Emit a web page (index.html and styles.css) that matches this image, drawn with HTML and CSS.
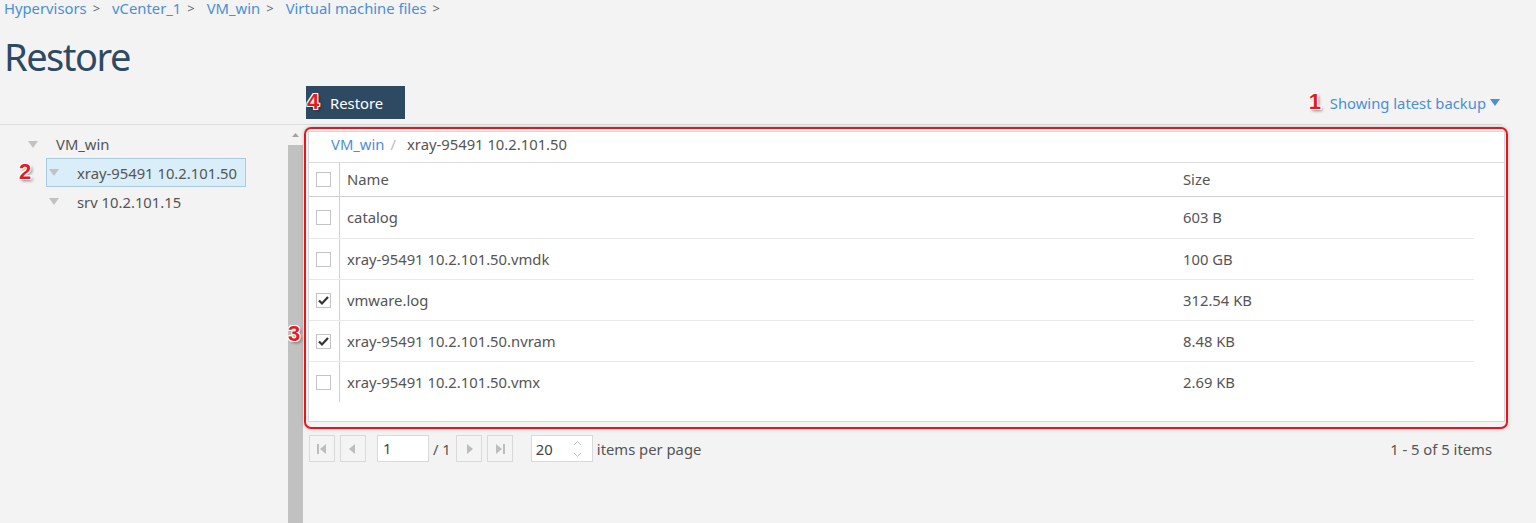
FILE: index.html
```html
<!DOCTYPE html>
<html lang="en">
<head>
    <meta charset="UTF-8">
    <meta name="viewport" content="width=device-width, initial-scale=1.0">
    <title>Restore</title>
    <link rel="stylesheet" href="styles.css">
</head>
<body>
    <div class="crumbs">
        <a href="#">Hypervisors</a><span class="sep">&gt;</span>
        <a href="#">vCenter_1</a><span class="sep">&gt;</span>
        <a href="#">VM_win</a><span class="sep">&gt;</span>
        <a href="#">Virtual machine files</a><span class="sep">&gt;</span>
    </div>

    <h1 class="title">Restore</h1>

    <div class="toolbar">
        <button class="restore-btn"><span class="mark mark-4">4</span>Restore</button>
        <a class="backup-link" href="#"><span class="mark mark-1">1</span>Showing latest backup
            <svg width="10" height="7" viewBox="0 0 10 7"><polygon points="0,0 10,0 5,7" fill="#4b8fd5"/></svg>
        </a>
    </div>

    <div class="main">
        <div class="tree">
            <div class="node root">
                <svg class="tri" width="10" height="7" viewBox="0 0 10 7"><polygon points="0,0 10,0 5,7"/></svg>VM_win
            </div>
            <div class="node child selected">
                <span class="mark mark-2">2</span>
                <svg class="tri" width="10" height="7" viewBox="0 0 10 7"><polygon points="0,0 10,0 5,7"/></svg>xray-95491 10.2.101.50
            </div>
            <div class="node child">
                <svg class="tri" width="10" height="7" viewBox="0 0 10 7"><polygon points="0,0 10,0 5,7"/></svg>srv 10.2.101.15
            </div>
        </div>

        <div class="scrollbar">
            <div class="scroll-up"><svg width="7" height="4" viewBox="0 0 7 4"><polygon points="0,4 7,4 3.5,0" fill="#a3a3a3"/></svg></div>
            <div class="thumb"></div>
        </div>

        <div class="content">
            <div class="callout">
                <span class="mark mark-3">3</span>
                <div class="grid">
                    <div class="grid-crumbs">
                        <a href="#">VM_win</a><span class="slash">/</span><span>xray-95491 10.2.101.50</span>
                    </div>
                    <div class="grid-head">
                        <div class="check-cell"><span class="checkbox"></span></div>
                        <div class="name-cell">Name</div>
                        <div class="size-cell">Size</div>
                    </div>
                    <div class="grid-body">
                        <div class="row">
                            <div class="check-cell"><span class="checkbox"></span></div>
                            <div class="name-cell">catalog</div>
                            <div class="size-cell">603 B</div>
                        </div>
                        <div class="row">
                            <div class="check-cell"><span class="checkbox"></span></div>
                            <div class="name-cell">xray-95491 10.2.101.50.vmdk</div>
                            <div class="size-cell">100 GB</div>
                        </div>
                        <div class="row">
                            <div class="check-cell"><span class="checkbox"><svg width="13" height="13" viewBox="0 0 13 13"><polyline points="2,6.5 5,9.5 11,3" fill="none" stroke="#333" stroke-width="2.2"/></svg></span></div>
                            <div class="name-cell">vmware.log</div>
                            <div class="size-cell">312.54 KB</div>
                        </div>
                        <div class="row">
                            <div class="check-cell"><span class="checkbox"><svg width="13" height="13" viewBox="0 0 13 13"><polyline points="2,6.5 5,9.5 11,3" fill="none" stroke="#333" stroke-width="2.2"/></svg></span></div>
                            <div class="name-cell">xray-95491 10.2.101.50.nvram</div>
                            <div class="size-cell">8.48 KB</div>
                        </div>
                        <div class="row">
                            <div class="check-cell"><span class="checkbox"></span></div>
                            <div class="name-cell">xray-95491 10.2.101.50.vmx</div>
                            <div class="size-cell">2.69 KB</div>
                        </div>
                    </div>
                </div>
            </div>

            <div class="pager">
                <span class="pg-btn"><svg width="12" height="12" viewBox="0 0 12 12"><rect x="1" y="1" width="2" height="10"/><polygon points="10,1 4,6 10,11"/></svg></span>
                <span class="pg-btn prev"><svg width="12" height="12" viewBox="0 0 12 12"><polygon points="8,1 2,6 8,11"/></svg></span>
                <span class="pg-input">1</span>
                <span class="pg-of">/ 1</span>
                <span class="pg-btn"><svg width="12" height="12" viewBox="0 0 12 12"><polygon points="4,1 10,6 4,11"/></svg></span>
                <span class="pg-btn last"><svg width="12" height="12" viewBox="0 0 12 12"><polygon points="2,1 8,6 2,11"/><rect x="9" y="1" width="2" height="10"/></svg></span>
                <span class="pg-size">20
                    <svg width="9" height="18" viewBox="0 0 9 18"><polyline points="1,5 4.5,1.5 8,5" fill="none" stroke="#c4c4c4"/><polyline points="1,13 4.5,16.5 8,13" fill="none" stroke="#c4c4c4"/></svg>
                </span>
                <span class="pg-label">items per page</span>
                <span class="pg-info">1 - 5 of 5 items</span>
            </div>
        </div>
    </div>
</body>
</html>
```

FILE: styles.css
```css
body{
    margin:0;
    height:523px;
    overflow:hidden;
    background-color:#f3f3f3;
    font-family:"Noto Sans","Open Sans",sans-serif;
    font-size:14.8px;
    color:#555;
}
a{
    color:#4b8fd5;
    text-decoration:none;
}

/* top breadcrumb */
.crumbs{
    display:flex;
    align-items:center;
    height:16px;
    line-height:16px;
    padding-left:4px;
}
.crumbs .sep{
    margin:0 12px 0 6px;
    color:#666;
    font-size:13px;
}

.title{
    margin:18px 0 0 4px;
    font-size:38px;
    font-weight:normal;
    line-height:44px;
    letter-spacing:-1.5px;
    color:#2e4a62;
}

.toolbar{
    display:flex;
    align-items:center;
    justify-content:space-between;
    padding:8px 0 5px 306px;
    margin-right:34px;
    border-bottom:1px solid #dedede;
}
.restore-btn{
    position:relative;
    width:99px;
    height:33px;
    padding:0 0 0 24px;
    text-align:left;
    border:none;
    background-color:#2e4a62;
    color:white;
    font-family:inherit;
    font-size:14.8px;
    cursor:pointer;
}
.backup-link{
    position:relative;
    display:flex;
    align-items:center;
    gap:4px;
    margin-right:2px;
}

/* red callout numbers */
.mark{
    position:absolute;
    color:#e41b23;
    font-family:"Liberation Sans",Arial,sans-serif;
    font-weight:bold;
    font-size:22px;
    line-height:24px;
    text-shadow:-1px -1px 0 #fff,1px -1px 0 #fff,-1px 1px 0 #fff,1px 1px 0 #fff,2px 2px 3px rgba(0,0,0,.45);
}
.mark-4{ left:1px; top:4px; }
.mark-1{ left:-21px; top:-3px; }
.mark-2{ left:-28px; top:1px; }
.mark-3{ left:-18px; top:193px; }

.main{
    display:flex;
    height:398px;
}

/* tree */
.tree{
    width:288px;
    padding-top:5px;
    box-sizing:border-box;
}
.node{
    display:flex;
    align-items:center;
    height:28px;
}
.tri{
    fill:#c2c2c2;
    margin-right:18px;
}
.root{
    padding-left:28px;
}
.child{
    position:relative;
    width:fit-content;
    height:29px;
    box-sizing:border-box;
    margin-left:46px;
    padding:0 8px 0 2px;
    border:1px solid transparent;
}
.selected{
    background-color:#d9eef9;
    border-color:#a9cbdd;
}

.scrollbar{
    width:15px;
    display:flex;
    flex-direction:column;
}
.scroll-up{
    height:20px;
    display:flex;
    align-items:center;
    justify-content:center;
}
.thumb{
    flex:1;
    background-color:#c1c1c1;
}

/* grid */
.content{
    flex:1;
    padding-top:2px;
}
.callout{
    position:relative;
    margin:0 28px 0 1px;
    padding:2px 1px 5px 2px;
    border:2px solid #e8141c;
    border-radius:7px;
    box-shadow:0 0 4px rgba(0,0,0,.2);
}
.grid{
    background-color:white;
    border:1px solid #d5d5d5;
}
.grid-crumbs{
    display:flex;
    height:30px;
    line-height:24px;
    padding-left:22px;
    border-bottom:1px solid #dcdcdc;
}
.grid-crumbs .slash{
    margin:0 11px 0 6px;
    color:#bbb;
}
.grid-head{
    display:grid;
    grid-template-columns:31px 835px 1fr;
    height:33px;
    line-height:33px;
    border-bottom:1px solid #cfcfcf;
}
.check-cell{
    display:flex;
    align-items:center;
    padding-left:7px;
    box-sizing:border-box;
    border-right:1px solid #cfcfcf;
}
.name-cell{
    padding-left:7px;
}
.size-cell{
    padding-left:8px;
}
.checkbox{
    width:15px;
    height:15px;
    box-sizing:border-box;
    border:1px solid #c4c4c4;
    background-color:white;
    display:flex;
}
.grid-body{
    padding-bottom:19px;
}
.row{
    display:grid;
    grid-template-columns:31px 835px 299px;
    width:1165px;
    height:41px;
    line-height:41px;
    box-sizing:border-box;
}
.row + .row{
    border-top:1px solid #e9e9e9;
    line-height:40px;
}

/* pager */
.pager{
    display:flex;
    align-items:center;
    height:27px;
    margin:6px 44px 0 6px;
}
.pg-btn{
    width:26px;
    height:27px;
    box-sizing:border-box;
    border:1px solid #d9d9d9;
    background-color:#f4f4f4;
    display:flex;
    align-items:center;
    justify-content:center;
    fill:#bdbdbd;
}
.pg-btn.prev{ margin-left:5px; }
.pg-btn.last{ margin-left:5px; }
.pg-input{
    width:52px;
    height:27px;
    box-sizing:border-box;
    margin-left:11px;
    padding-left:5px;
    border:1px solid #d9d9d9;
    background-color:white;
    line-height:25px;
    color:#444;
}
.pg-of{
    margin:0 5px 0 4px;
}
.pg-size{
    display:flex;
    align-items:center;
    justify-content:space-between;
    width:62px;
    height:27px;
    box-sizing:border-box;
    margin-left:18px;
    padding:0 10px 0 4px;
    border:1px solid #d9d9d9;
    background-color:white;
    color:#444;
}
.pg-label{
    margin-left:4px;
}
.pg-info{
    margin-left:auto;
}
```
